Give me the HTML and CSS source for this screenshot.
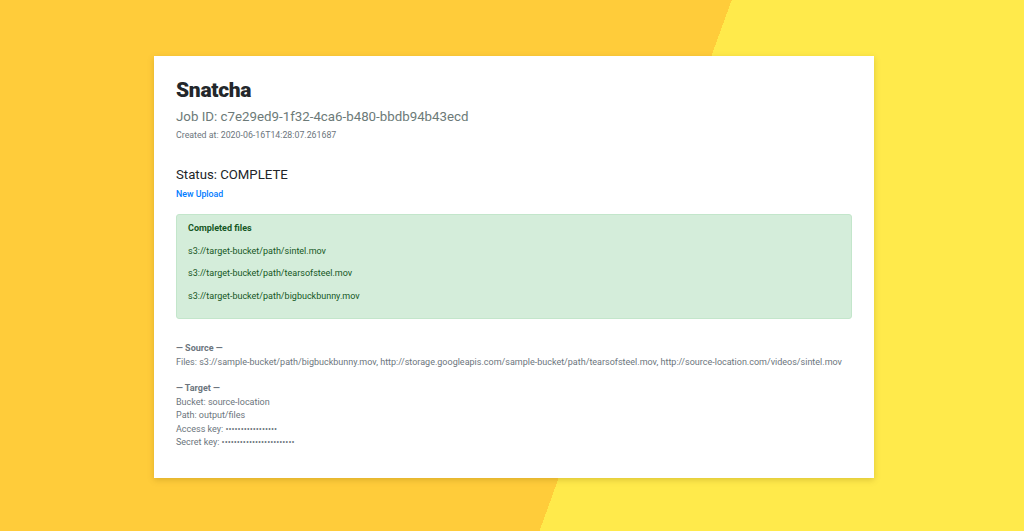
FILE: index.html
```html
<!DOCTYPE html>
<html lang="en">
<head>
<meta charset="utf-8">
<title>Snatcha</title>
<link rel="stylesheet" href="styles.css">
</head>
<body>
<main class="card">
  <h1 class="brand">Snatcha</h1>
  <h2 class="job-id">Job ID: c7e29ed9-1f32-4ca6-b480-bbdb94b43ecd</h2>
  <p class="created">Created at: 2020-06-16T14:28:07.261687</p>

  <h3 class="status">Status: COMPLETE</h3>
  <a class="link" href="#">New Upload</a>

  <section class="alert">
    <p class="alert-title">Completed files</p>
    <p class="alert-item">s3://target-bucket/path/sintel.mov</p>
    <p class="alert-item">s3://target-bucket/path/tearsofsteel.mov</p>
    <p class="alert-item">s3://target-bucket/path/bigbuckbunny.mov</p>
  </section>

  <section class="details">
    <p class="label">— Source —</p>
    <p>Files: s3://sample-bucket/path/bigbuckbunny.mov, http://storage.googleapis.com/sample-bucket/path/tearsofsteel.mov, http://source-location.com/videos/sintel.mov</p>
  </section>

  <section class="details">
    <p class="label">— Target —</p>
    <p>Bucket: source-location</p>
    <p>Path: output/files</p>
    <p>Access key: •••••••••••••••••</p>
    <p>Secret key: ••••••••••••••••••••••••</p>
  </section>
</main>
</body>
</html>
```

FILE: styles.css
```css
html {
  height: 100%;
  background: linear-gradient(109.9deg, #ffcc3a 688px, #ffea4b 688px);
}

body {
  margin: 0;
  min-height: 100%;
  font-family: Roboto, "Liberation Sans", sans-serif;
  font-size: 9px;
  line-height: 13.5px;
  color: #212529;
  display: flex;
  justify-content: center;
  padding-top: 56px;
  box-sizing: border-box;
}

.card {
  width: 720px;
  height: 422px;
  box-sizing: border-box;
  margin-left: 4px;
  background: #fff;
  padding: 22px 22px;
  box-shadow: 0 2px 6px rgba(120, 90, 0, 0.25);
}

p, h1, h2, h3 {
  margin: 0;
}

.brand {
  font-family: Roboto, "Open Sans", sans-serif;
  font-weight: 900;
  font-size: 21px;
  line-height: 24px;
  color: #23272b;
  letter-spacing: -0.3px;
}

.job-id {
  margin-top: 7px;
  font-weight: 400;
  font-size: 13.3px;
  line-height: 16px;
  color: #6c7a78;
}

.created {
  margin-top: 4px;
  color: #6c757d;
  font-size: 8.8px;
}

.status {
  margin-top: 24px;
  font-weight: 400;
  font-size: 13.2px;
  line-height: 16px;
  color: #212529;
}

.link {
  display: block;
  margin-top: 5px;
  color: #007bff;
  text-decoration: none;
  font-weight: 500;
  font-size: 8.8px;
}

.alert {
  margin-top: 13px;
  background: #d4edda;
  border: 1px solid #c3e6cb;
  border-radius: 3px;
  color: #155724;
  padding: 7px 11px 8px;
  height: 105px;
  box-sizing: border-box;
}

.alert-title {
  font-weight: 700;
  margin-bottom: 9px;
}

.alert-item {
  margin-bottom: 9px;
}

.details {
  color: #6c757d;
  margin-top: 23px;
}

.details + .details {
  margin-top: 13px;
}

.label {
  font-weight: 700;
}
```
